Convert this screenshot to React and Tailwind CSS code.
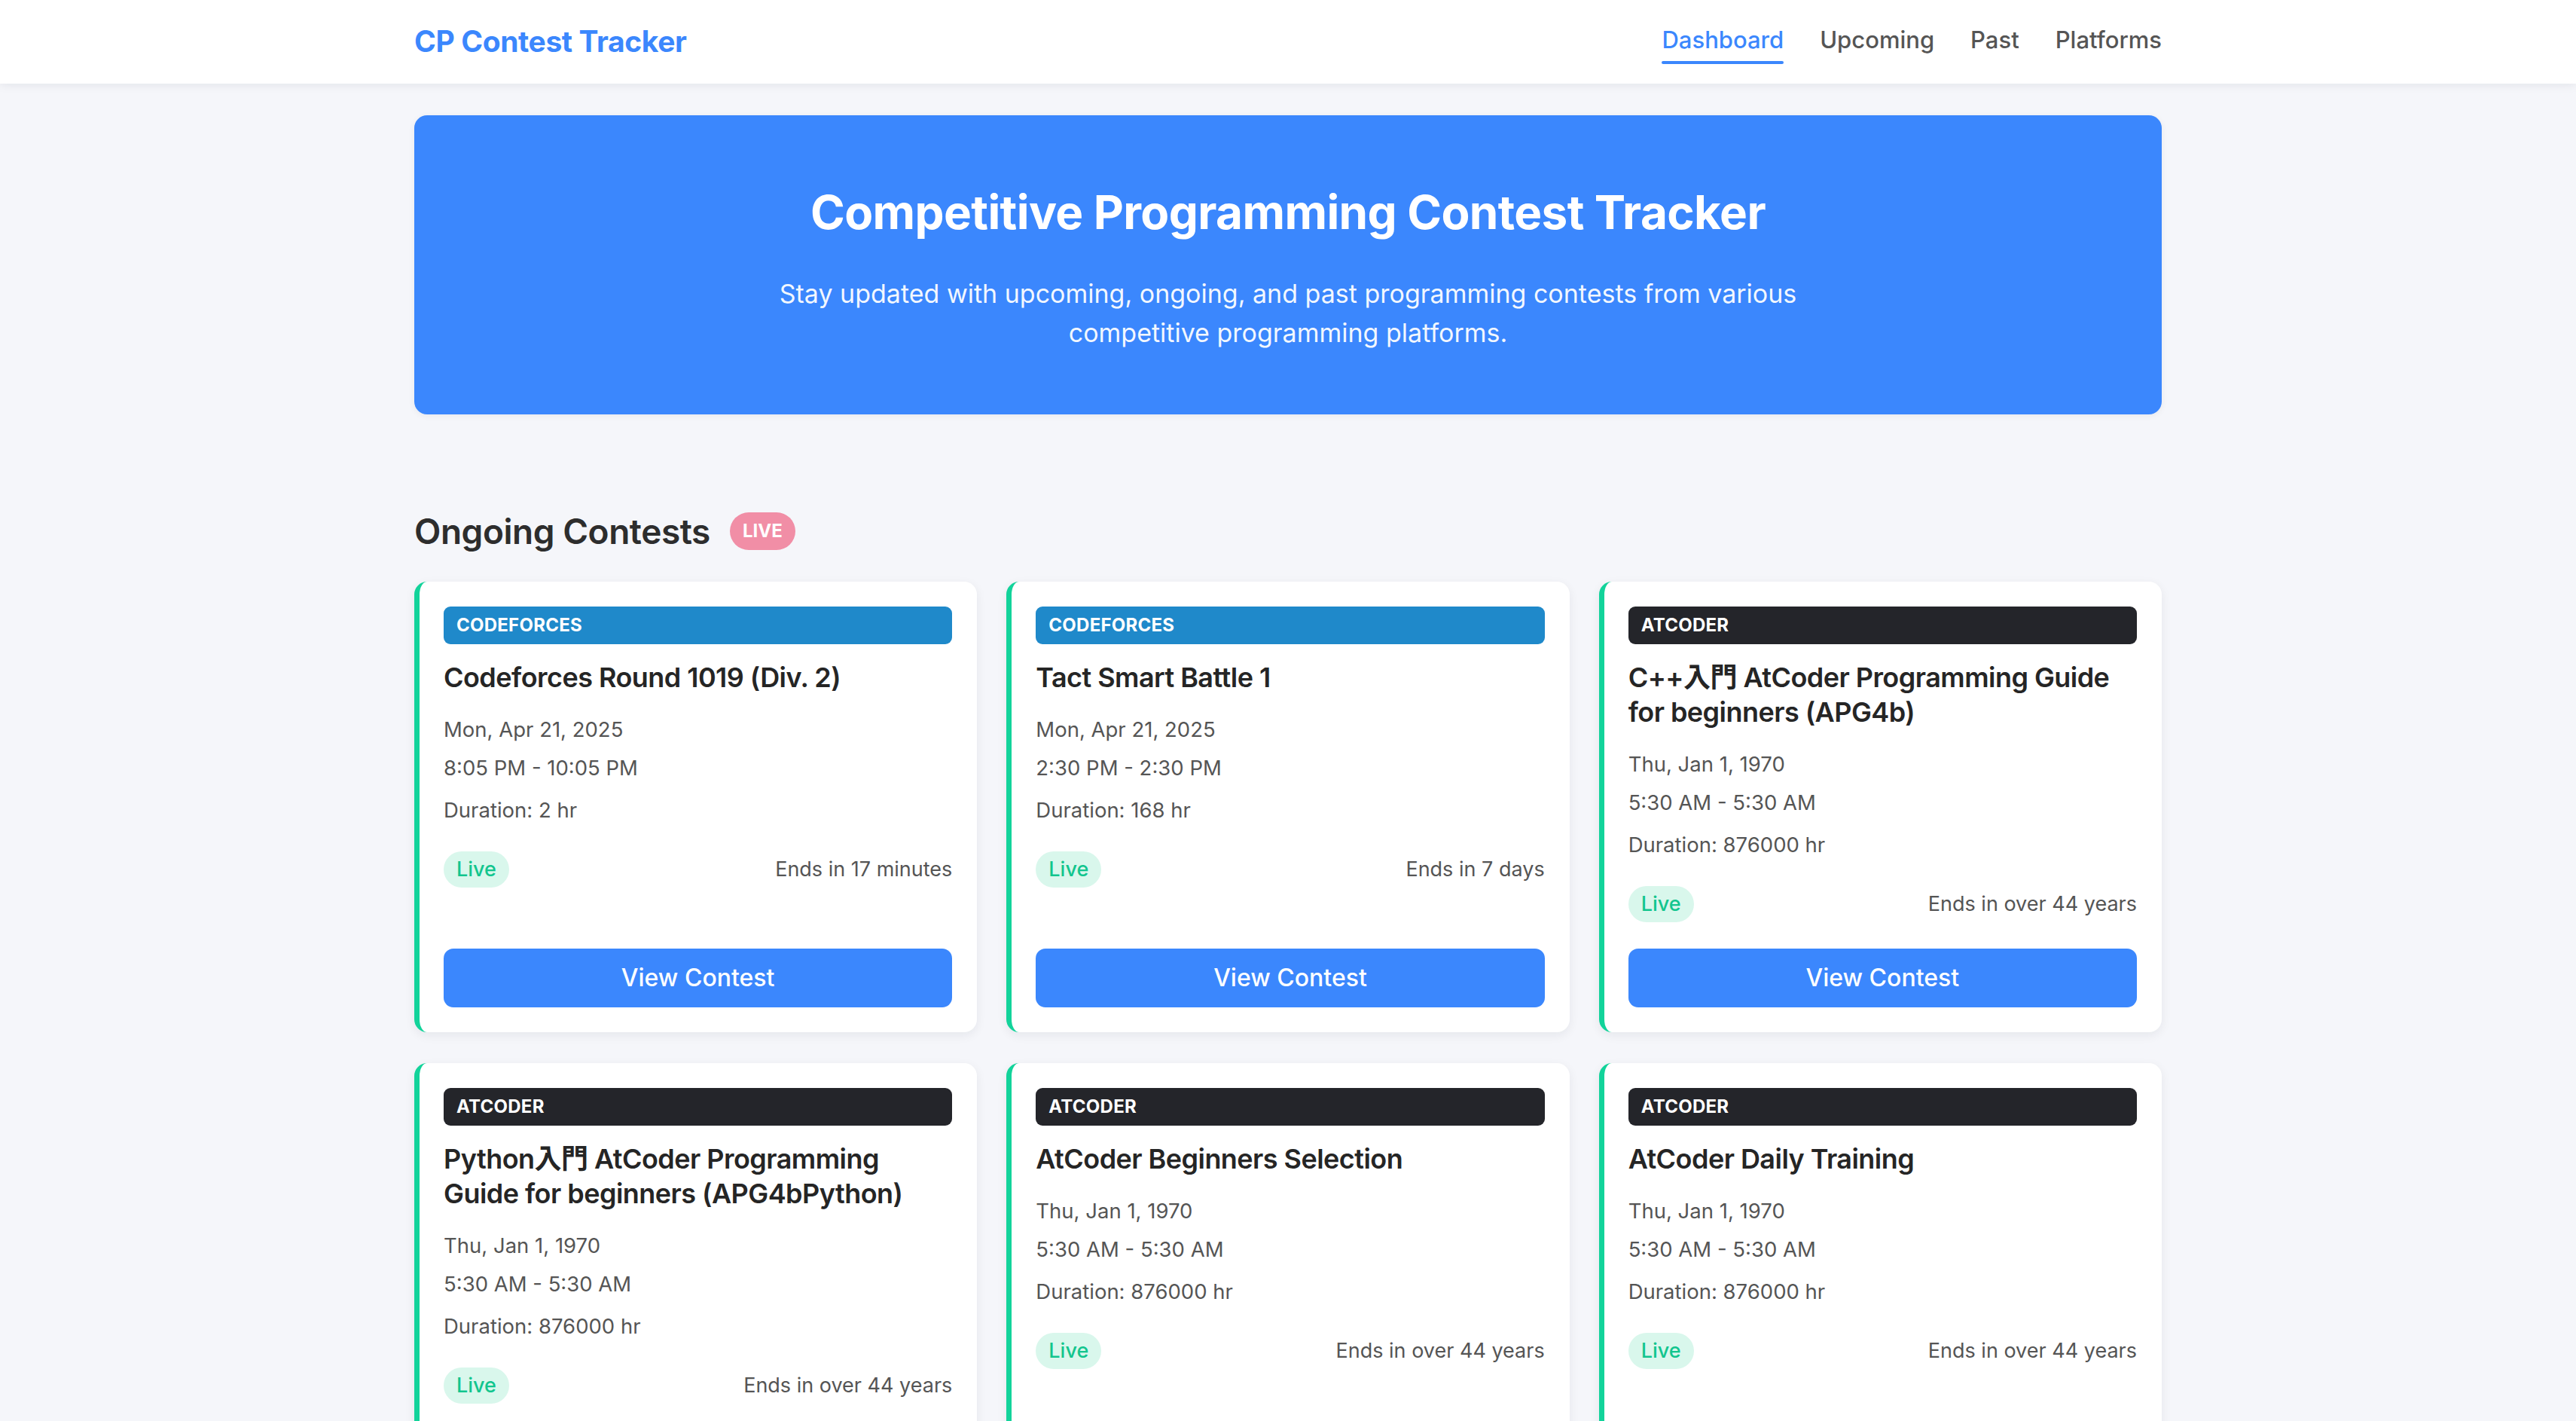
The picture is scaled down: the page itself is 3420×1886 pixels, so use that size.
import React from 'react';

const contests = [
    {
        id: 1,
        platform: 'codeforces',
        name: 'Codeforces Round 1019 (Div. 2)',
        date: 'Mon, Apr 21, 2025',
        time: '8:05 PM - 10:05 PM',
        duration: 'Duration: 2 hr',
        ends: 'Ends in 17 minutes',
    },
    {
        id: 2,
        platform: 'codeforces',
        name: 'Tact Smart Battle 1',
        date: 'Mon, Apr 21, 2025',
        time: '2:30 PM - 2:30 PM',
        duration: 'Duration: 168 hr',
        ends: 'Ends in 7 days',
    },
    {
        id: 3,
        platform: 'atcoder',
        name: 'C++入門 AtCoder Programming Guide for beginners (APG4b)',
        date: 'Thu, Jan 1, 1970',
        time: '5:30 AM - 5:30 AM',
        duration: 'Duration: 876000 hr',
        ends: 'Ends in over 44 years',
    },
    {
        id: 4,
        platform: 'atcoder',
        name: 'Python入門 AtCoder Programming Guide for beginners (APG4bPython)',
        date: 'Thu, Jan 1, 1970',
        time: '5:30 AM - 5:30 AM',
        duration: 'Duration: 876000 hr',
        ends: 'Ends in over 44 years',
    },
    {
        id: 5,
        platform: 'atcoder',
        name: 'AtCoder Beginners Selection',
        date: 'Thu, Jan 1, 1970',
        time: '5:30 AM - 5:30 AM',
        duration: 'Duration: 876000 hr',
        ends: 'Ends in over 44 years',
    },
    {
        id: 6,
        platform: 'atcoder',
        name: 'AtCoder Daily Training',
        date: 'Thu, Jan 1, 1970',
        time: '5:30 AM - 5:30 AM',
        duration: 'Duration: 876000 hr',
        ends: 'Ends in over 44 years',
    },
];

const navItems = ['Dashboard', 'Upcoming', 'Past', 'Platforms'];

const ContestCard = ({ contest }) => {
    const badgeColor = contest.platform === 'codeforces' ? 'bg-[#1f89ca]' : 'bg-[#24252a]';

    return (
        <div className="flex flex-col bg-white rounded-[17px] border-l-[7px] border-[#12d39a] shadow-[0_4px_14px_rgba(15,23,42,0.07)] p-[33px] pl-[32px]">
            <div className="flex-1 flex flex-col">
                {/* Platform badge */}
                <div className={`${badgeColor} h-[50px] rounded-[9px] flex items-center px-[17px]`}>
                    <span className="text-white text-[24px] font-bold uppercase tracking-[0.01em]">
                        {contest.platform}
                    </span>
                </div>

                <h3 className="mt-[21px] text-[36px] leading-[46px] font-semibold text-[#252525] tracking-[-0.015em]">
                    {contest.name}
                </h3>

                <p className="mt-[23px] text-[27.5px] leading-[46px] text-[#555]">{contest.date}</p>
                <p className="mt-[5px] text-[27.5px] leading-[46px] text-[#555]">{contest.time}</p>
                <p className="mt-[10px] text-[27.5px] leading-[46px] text-[#555]">{contest.duration}</p>

                <div className="mt-[32px] flex items-center justify-between">
                    <span className="h-[48px] px-[17px] rounded-full bg-[#d9f7ec] text-[#12c58e] text-[27px] font-medium flex items-center">
                        Live
                    </span>
                    <span className="text-[27px] text-[#555]">{contest.ends}</span>
                </div>
            </div>

            <button className="mt-[35px] h-[78px] w-full rounded-[13px] bg-[#3b87fd] text-white text-[32px] font-medium">
                View Contest
            </button>
        </div>
    );
};

const App = () => {
    return (
        <div className="min-h-screen bg-[#f5f6fa] font-[Inter,'Noto_Sans_CJK_JP',sans-serif]">
            {/* Header */}
            <header className="bg-white h-[111px] shadow-[0_2px_12px_rgba(15,23,42,0.08)]">
                <div className="w-[2320px] mx-auto h-full flex items-center justify-between">
                    <h1 className="text-[39px] font-bold text-[#3b87fd] tracking-[-0.01em]">CP Contest Tracker</h1>
                    <nav className="flex items-center gap-[48px]">
                        {navItems.map((item, i) => (
                            <div key={item} className="flex flex-col pt-[6px]">
                                <span
                                    className={`text-[31px] leading-[40px] font-medium ${
                                        i === 0 ? 'text-[#3b87fd]' : 'text-[#555]'
                                    }`}
                                >
                                    {item}
                                </span>
                                <div
                                    className={`mt-[8px] h-[4px] rounded-full ${
                                        i === 0 ? 'bg-[#3b87fd]' : 'bg-transparent'
                                    }`}
                                ></div>
                            </div>
                        ))}
                    </nav>
                </div>
            </header>

            <main className="w-[2320px] mx-auto pt-[42px] pb-[80px]">
                {/* Hero */}
                <section className="bg-[#3b87fd] rounded-[17px] pt-[92px] pb-[82px] flex flex-col items-center text-center shadow-[0_2px_10px_rgba(15,23,42,0.06)]">
                    <h2 className="text-[62px] leading-[73px] font-bold text-white tracking-[-0.01em]">
                        Competitive Programming Contest Tracker
                    </h2>
                    <p className="mt-[46px] max-w-[1400px] text-[34px] leading-[52px] text-white/95">
                        Stay updated with upcoming, ongoing, and past programming contests from various competitive programming platforms.
                    </p>
                </section>

                {/* Ongoing */}
                <section className="mt-[129px]">
                    <div className="flex items-center gap-[26px] h-[52px]">
                        <h2 className="text-[46px] font-semibold text-[#2d2d2d] tracking-[-0.01em]">Ongoing Contests</h2>
                        <span className="h-[50px] px-[17px] rounded-full bg-[#f18ea6] text-white text-[24px] font-bold flex items-center">
                            LIVE
                        </span>
                    </div>

                    <div className="mt-[41px] grid grid-cols-3 gap-x-[39px] gap-y-[41px]">
                        {contests.map((contest) => (
                            <ContestCard key={contest.id} contest={contest} />
                        ))}
                    </div>
                </section>
            </main>
        </div>
    );
};

export default App;
